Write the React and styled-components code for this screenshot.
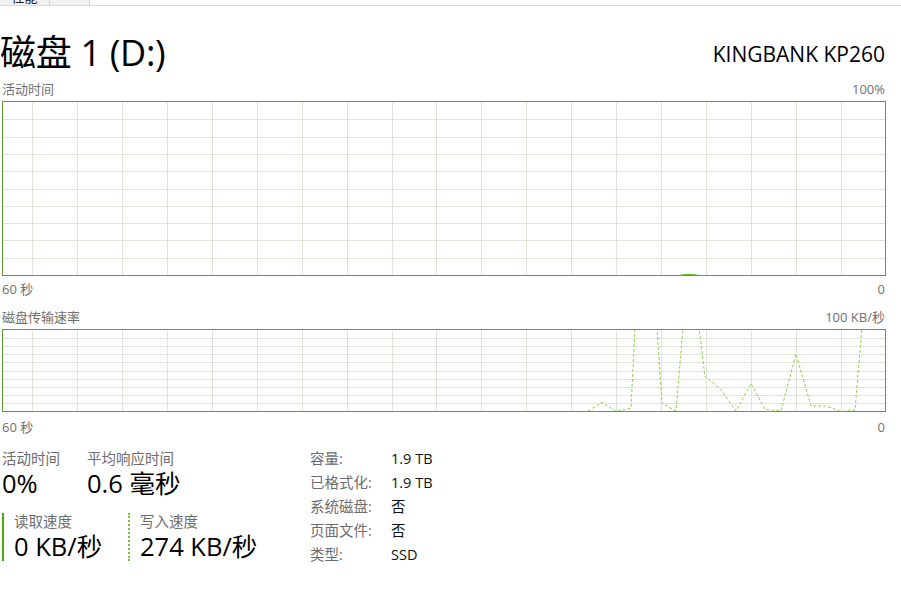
import React from "react";
import styled, { createGlobalStyle } from "styled-components";

const Global = createGlobalStyle`
  html, body { margin: 0; padding: 0; background: #fff; }
  body {
    font-family: "Open Sans", "Noto Sans CJK SC", sans-serif;
    color: #000;
    width: 901px;
    height: 601px;
    overflow: hidden;
  }
`;

const Page = styled.div`
  padding: 0 16px 0 2px;
`;

const TabStrip = styled.div`
  display: flex;
  height: 5px;
  margin: 0 -16px 0 -2px;
  border-bottom: 1px solid #dadada;
  overflow: hidden;
`;

const Tab = styled.div`
  width: ${(p) => p.$w}px;
  height: 5px;
  background: #f0f0f0;
  border-right: 1px solid #d6d6d6;
  display: flex;
  align-items: flex-end;
  justify-content: center;
  overflow: hidden;
  font-size: 13px;
  color: #222;
  span { line-height: 13px; margin-bottom: 1px; }
`;

const Header = styled.div`
  display: flex;
  justify-content: space-between;
  align-items: center;
  height: 44px;
  margin-top: 25px;
`;

const Title = styled.div`
  font-size: 36px;
  line-height: 44px;
  margin-left: -2px;
  font-weight: 400;
  letter-spacing: -0.3px;
`;

const Model = styled.div`
  font-size: 21px;
  line-height: 28px;
  margin-top: 2px;
`;

const GraphLabel = styled.div`
  display: flex;
  justify-content: space-between;
  font-size: 13px;
  line-height: 16px;
  color: #707070;
  margin-top: ${(p) => p.$mt}px;
  margin-bottom: ${(p) => p.$mb}px;
`;

const Frame = styled.div`
  border: 1px solid #5e9e2c;
  width: 882px;
  height: ${(p) => p.$h}px;
  svg { display: block; }
`;

const Stats = styled.div`
  display: flex;
  margin-top: 12px;
`;

const Left = styled.div`
  width: 308px;
`;

const TopRow = styled.div`
  display: flex;
`;

const Metric = styled.div`
  width: ${(p) => (p.$w ? p.$w + "px" : "auto")};
`;

const MLabel = styled.div`
  font-size: 14.5px;
  line-height: 24px;
  color: #6d6d6d;
`;

const MValue = styled.div`
  font-size: 25.5px;
  line-height: 25px;
  color: #000;
`;

const BottomRow = styled.div`
  display: flex;
  margin-top: 17px;
`;

const Speed = styled.div`
  width: ${(p) => (p.$w ? p.$w + "px" : "auto")};
  border-left: 2px ${(p) => p.$style} ${(p) => p.$color};
  padding-left: 10px;
  height: 48px;
  box-sizing: border-box;
`;

const SLabel = styled.div`
  font-size: 14.5px;
  line-height: 18px;
  height: 19px;
  color: #6d6d6d;
`;

const SValue = styled.div`
  font-size: 25.5px;
  line-height: 28px;
  color: #000;
`;

const Props = styled.div`
  display: grid;
  grid-template-columns: 81px auto;
  font-size: 14.5px;
  line-height: 24px;
`;

const PKey = styled.div`
  color: #6d6d6d;
`;

const PVal = styled.div`
  color: #111;
`;

function Grid({ w, h, rows }) {
  const lines = [];
  for (let x = 29; x < w; x += 44.94) {
    const xx = Math.round(x) + 0.5;
    lines.push(<line key={"v" + x} x1={xx} y1={0} x2={xx} y2={h} />);
  }
  for (let i = 1; i < rows; i++) {
    const y = Math.round((h / rows) * i) + 0.5;
    lines.push(<line key={"h" + i} x1={0} y1={y} x2={w} y2={y} />);
  }
  return (
    <g stroke="#dfe5d9" strokeWidth="1">
      {lines}
    </g>
  );
}

const writePts = [
  [585, 81], [599, 72.3], [613, 81.5], [628, 78.3], [632, -2],
  [654, -2], [659, 73.3], [673, 81], [680, -2], [696, -2], [702, 46.7],
  [717, 58.3], [733, 81], [748, 53.3], [762, 79.3], [778, 81], [793, 24],
  [808, 76], [823, 76], [838, 81.5], [852, 80], [859, -2], [882, -2],
];

export default function App() {
  const W = 882;
  return (
    <>
      <Global />
      <Page>
        <TabStrip>
          <Tab $w={49}><span>性能</span></Tab>
          <Tab $w={39}><span>&nbsp;</span></Tab>
        </TabStrip>
        <Header>
          <Title>磁盘 1 (D:)</Title>
          <Model>KINGBANK KP260</Model>
        </Header>

        <GraphLabel $mt={6} $mb={4}>
          <span>活动时间</span>
          <span>100%</span>
        </GraphLabel>
        <Frame $h={173}>
          <svg width={W} height={173} viewBox={`0 0 ${W} 173`}>
            <Grid w={W} h={173} rows={10} />
            <path d="M676 173 Q686 170.5 696 173 Z" fill="#6fbf3a" />
          </svg>
        </Frame>
        <GraphLabel $mt={5} $mb={0}>
          <span>60 秒</span>
          <span>0</span>
        </GraphLabel>

        <GraphLabel $mt={12} $mb={4}>
          <span>磁盘传输速率</span>
          <span>100 KB/秒</span>
        </GraphLabel>
        <Frame $h={81}>
          <svg width={W} height={81} viewBox={`0 0 ${W} 81`}>
            <Grid w={W} h={81} rows={10} />
            <polyline
              points={writePts.map((p) => p.join(",")).join(" ")}
              fill="none"
              stroke="#8fcf4f"
              strokeWidth="1"
              strokeDasharray="3 2"
            />
          </svg>
        </Frame>
        <GraphLabel $mt={7} $mb={0}>
          <span>60 秒</span>
          <span>0</span>
        </GraphLabel>

        <Stats>
          <Left>
            <TopRow>
              <Metric $w={85}>
                <MLabel>活动时间</MLabel>
                <MValue>0%</MValue>
              </Metric>
              <Metric>
                <MLabel>平均响应时间</MLabel>
                <MValue>0.6 毫秒</MValue>
              </Metric>
            </TopRow>
            <BottomRow>
              <Speed $w={126} $style="solid" $color="#4da60c">
                <SLabel>读取速度</SLabel>
                <SValue>0 KB/秒</SValue>
              </Speed>
              <Speed $style="dotted" $color="#7cc43c">
                <SLabel>写入速度</SLabel>
                <SValue>274 KB/秒</SValue>
              </Speed>
            </BottomRow>
          </Left>
          <Props>
            <PKey>容量:</PKey><PVal>1.9 TB</PVal>
            <PKey>已格式化:</PKey><PVal>1.9 TB</PVal>
            <PKey>系统磁盘:</PKey><PVal>否</PVal>
            <PKey>页面文件:</PKey><PVal>否</PVal>
            <PKey>类型:</PKey><PVal>SSD</PVal>
          </Props>
        </Stats>
      </Page>
    </>
  );
}
